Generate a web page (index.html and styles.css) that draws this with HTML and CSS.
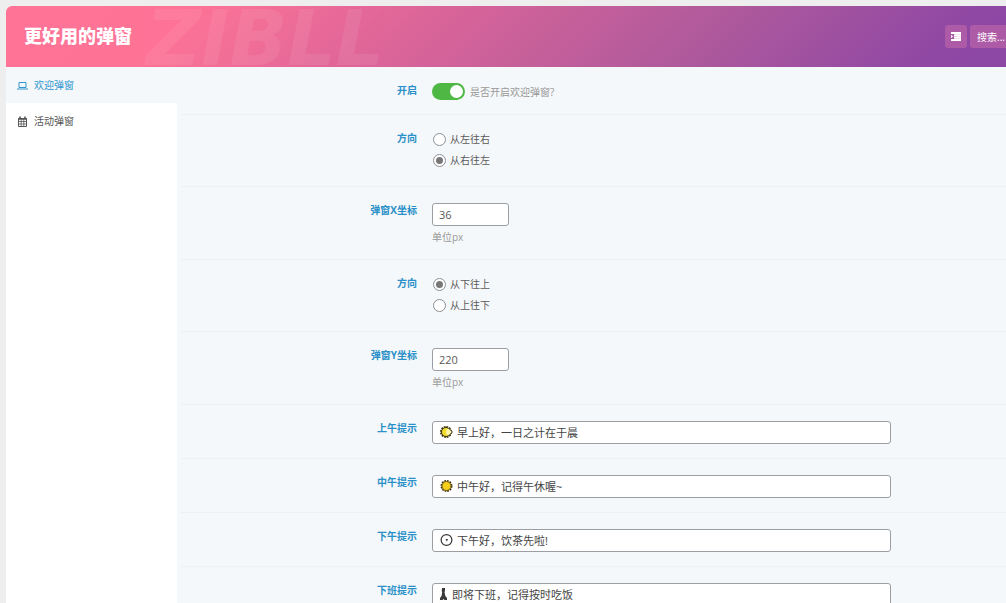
FILE: index.html
```html
<!DOCTYPE html>
<html lang="zh-CN">
<head>
<meta charset="utf-8">
<meta name="viewport" content="width=device-width, initial-scale=1">
<title>更好用的弹窗</title>
<link rel="stylesheet" href="styles.css">
</head>
<body>
<div class="panel">
  <header class="header">
    <span class="watermark" aria-hidden="true">ZIBLL</span>
    <h1 class="title">更好用的弹窗</h1>
    <div class="tools">
      <button class="expand" type="button" aria-label="展开全部">
        <svg width="10" height="9" viewBox="0 0 10 9" fill="currentColor"><path d="M0 0h10v2H0zM3 2.6h7v1.6H3zM3 4.8h7v1.6H3zM0 7h10v2H0zM0 3l2.2 1.5L0 6z"/><path d="M3.4 2h6.6v6H3.4z" opacity=".6"/></svg>
      </button>
      <input class="search" type="text" placeholder="搜索..." aria-label="搜索">
    </div>
  </header>
  <div class="body">
    <nav class="nav">
      <a class="nav-item active" href="#welcome">
        <svg width="11" height="11" viewBox="0 0 11 11" fill="none" stroke="currentColor"><path d="M2 2.5h7v5H2zM0 9h11"/></svg>
        欢迎弹窗
      </a>
      <a class="nav-item" href="#activity">
        <svg width="11" height="11" viewBox="0 0 11 11" fill="none" stroke="currentColor"><path d="M1.5 2.5h8v8h-8z"/><path d="M3 .5v2M8 .5v2" stroke-width="1.6"/><path d="M1 3h9" stroke-width="1.4"/><path d="M1 5.5h9M1 8h9M4.2 3v7.5M6.8 3v7.5" stroke-width=".8"/></svg>
        活动弹窗
      </a>
    </nav>
    <form class="form">
      <div class="row">
        <label class="label" for="enable">开启</label>
        <div class="field inline">
          <input class="switch" type="checkbox" role="switch" id="enable" checked>
          <span class="hint">是否开启欢迎弹窗?</span>
        </div>
      </div>
      <div class="row" role="radiogroup" aria-labelledby="dir-x">
        <span class="label" id="dir-x">方向</span>
        <div class="field radios">
          <label class="option"><input class="radio" type="radio" name="dirx">从左往右</label>
          <label class="option"><input class="radio" type="radio" name="dirx" checked>从右往左</label>
        </div>
      </div>
      <div class="row">
        <label class="label" for="pos-x">弹窗X坐标</label>
        <div class="field">
          <input class="text short" type="text" id="pos-x" value="36">
          <span class="hint">单位px</span>
        </div>
      </div>
      <div class="row" role="radiogroup" aria-labelledby="dir-y">
        <span class="label" id="dir-y">方向</span>
        <div class="field radios">
          <label class="option"><input class="radio" type="radio" name="diry" checked>从下往上</label>
          <label class="option"><input class="radio" type="radio" name="diry">从上往下</label>
        </div>
      </div>
      <div class="row">
        <label class="label" for="pos-y">弹窗Y坐标</label>
        <div class="field">
          <input class="text short" type="text" id="pos-y" value="220">
          <span class="hint">单位px</span>
        </div>
      </div>
      <div class="row">
        <label class="label" for="morning">上午提示</label>
        <div class="field message">
          <input class="text" type="text" id="morning" value="早上好，一日之计在于晨">
          <svg class="symbol" width="13" height="12" viewBox="0 0 13 12"><circle cx="6" cy="6" r="5" fill="none" stroke="#332b0c" stroke-width="2" stroke-dasharray="1.7 .9"/><circle cx="6" cy="6" r="4.5" fill="#f0dc2c" stroke="#332b0c" stroke-width=".9"/><path d="M6.5 3.500 9 2.500 12.500 6 9 9.500 6 8z" fill="#fff6b0"/><path d="M9 2.500 12.400 6 9 9.500" fill="none" stroke="#332b0c"/></svg>
        </div>
      </div>
      <div class="row">
        <label class="label" for="noon">中午提示</label>
        <div class="field message">
          <input class="text" type="text" id="noon" value="中午好，记得午休喔~">
          <svg class="symbol" width="13" height="12" viewBox="0 0 13 12"><circle cx="6.500" cy="6" r="5" fill="none" stroke="#3d3410" stroke-width="2" stroke-dasharray="1.7 .9"/><circle cx="6.500" cy="6" r="4.500" fill="#f5cf1b" stroke="#6a5310" stroke-width=".9"/></svg>
        </div>
      </div>
      <div class="row">
        <label class="label" for="afternoon">下午提示</label>
        <div class="field message">
          <input class="text" type="text" id="afternoon" value="下午好，饮茶先啦!">
          <svg class="symbol" width="13" height="12" viewBox="0 0 13 12"><circle cx="6.500" cy="6" r="5.400" fill="#fff" stroke="#333" stroke-width="1.200"/><path d="M5.500 5h2.600L6.800 7.800z" fill="#444"/></svg>
        </div>
      </div>
      <div class="row">
        <label class="label" for="offwork">下班提示</label>
        <div class="field message narrow">
          <input class="text" type="text" id="offwork" value="即将下班，记得按时吃饭">
          <svg class="symbol" width="7" height="12" viewBox="0 0 7 12"><path d="M2 0h3v3l-.5 1 .8 4L7 10V12H4.500l-1-1-1 1H0v-2L1.500 8l.7-4-.5-1z" fill="#3a3a3a"/></svg>
        </div>
      </div>
    </form>
  </div>
</div>
</body>
</html>
```
FILE: styles.css
```css
* {
  box-sizing: border-box;
}

body {
  margin: 0;
  height: 100vh;
  overflow: hidden;
  padding: 6px 0 0 6px;
  background: #eeeeee;
  color: #5a5a5a;
  font: 10px/16px "Open Sans", "Noto Sans CJK SC", sans-serif;
}

input,
button {
  margin: 0;
  font: inherit;
  color: inherit;
}

.panel {
  min-height: 100%;
  display: flex;
  flex-direction: column;
  border-top-left-radius: 6px;
  overflow: hidden;
  background: #fff;
}

.header {
  position: relative;
  display: flex;
  align-items: center;
  justify-content: space-between;
  height: 61px;
  flex: none;
  padding-left: 18px;
  overflow: hidden;
  background: linear-gradient(135deg, #ff7396 0%, #fd7396 18%, #d96499 42%, #b05a9c 68%, #8f48a4 92%, #8c46a4 100%);
}

.watermark {
  position: absolute;
  left: 140px;
  top: 3px;
  color: #fff;
  opacity: 0.07;
  font: italic 700 76px/60px "DejaVu Sans", sans-serif;
}

.title {
  position: relative;
  margin: 0;
  padding-bottom: 2px;
  color: #fff;
  font-size: 18px;
  line-height: 24px;
  font-weight: 900;
}

.tools {
  position: relative;
  display: flex;
  gap: 3px;
}

.expand {
  display: grid;
  place-items: center;
  width: 22px;
  height: 23px;
  padding: 0;
  border: 0;
  border-radius: 3px;
  background: #ad5ba6;
  color: #fff;
}

.search {
  width: 36px;
  height: 23px;
  padding: 0 0 0 7px;
  border: 0;
  border-radius: 3px 0 0 3px;
  background: #ad5ba6;
  color: #fff;
}

.search::placeholder {
  color: #fff;
  opacity: 1;
}

.body {
  display: flex;
  flex: 1;
}

.nav {
  flex: none;
  width: 171px;
}

.nav-item {
  display: flex;
  align-items: center;
  gap: 6px;
  height: 36px;
  padding-left: 11px;
  color: #555;
  text-decoration: none;
}

.nav-item.active {
  background: #f5f8fa;
  color: #2f96cf;
}

.form {
  flex: 1;
  min-width: 0;
  padding-left: 4px;
  background: #f5f8fa;
}

.row {
  display: grid;
  grid-template-columns: 236px minmax(0, 459px);
  column-gap: 15px;
  padding: 16px 0 14px;
}

.row + .row {
  border-top: 1px solid #eef1f3;
}

.label {
  color: #2a90c8;
  font-weight: 700;
  line-height: 14px;
  text-align: right;
}

.hint {
  color: #999;
}

.inline {
  display: flex;
  align-items: center;
  gap: 5px;
}

.field {
  position: relative;
}

.field > .short + .hint {
  display: block;
  margin-top: 3px;
}

.switch {
  appearance: none;
  display: flex;
  width: 33px;
  height: 17px;
  padding: 2px;
  border-radius: 9px;
  background: #bbb;
}

.switch::before {
  content: "";
  width: 13px;
  height: 13px;
  border-radius: 50%;
  background: #fff;
}

.switch:checked {
  justify-content: flex-end;
  background: #4fb845;
}

.radios {
  display: flex;
  flex-direction: column;
  align-items: flex-start;
  gap: 5px;
  padding: 0 0 4px 1px;
}

.option {
  display: flex;
  align-items: center;
  gap: 4px;
}

.radio {
  appearance: none;
  display: grid;
  place-items: center;
  width: 13px;
  height: 13px;
  border: 1px solid #8c8f94;
  border-radius: 50%;
  background: #fff;
}

.radio:checked::before {
  content: "";
  width: 7px;
  height: 7px;
  border-radius: 50%;
  background: #777;
}

.text {
  display: block;
  width: 100%;
  height: 23px;
  padding: 0 6px;
  border: 1px solid #9b9ea3;
  border-radius: 3px;
  background: #fff;
  font-size: 11px;
}

.short {
  width: 77px;
}

.message .text {
  padding: 0 6px 2px 24px;
  color: #444;
}

.message.narrow .text {
  padding-left: 19px;
}

.symbol {
  position: absolute;
  left: 8px;
  top: 5px;
}
```
